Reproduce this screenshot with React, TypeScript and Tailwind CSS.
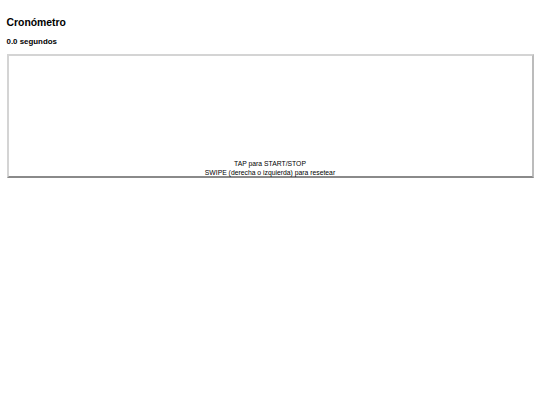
import React, { useRef, useState } from 'react';

export default function App() {
  const [elapsed, setElapsed] = useState(0);
  const [running, setRunning] = useState(false);
  const timer = useRef<number | null>(null);
  const startX = useRef<number | null>(null);

  const toggle = () => {
    if (running) {
      if (timer.current) window.clearInterval(timer.current);
      timer.current = null;
      setRunning(false);
    } else {
      timer.current = window.setInterval(() => setElapsed((t) => t + 0.1), 100);
      setRunning(true);
    }
  };

  const reset = () => {
    if (timer.current) window.clearInterval(timer.current);
    timer.current = null;
    setRunning(false);
    setElapsed(0);
  };

  const onPointerDown = (e: React.PointerEvent) => {
    startX.current = e.clientX;
  };

  const onPointerUp = (e: React.PointerEvent) => {
    if (startX.current === null) return;
    const dx = e.clientX - startX.current;
    startX.current = null;
    if (Math.abs(dx) > 40) reset();
    else toggle();
  };

  return (
    <div className="min-h-[405px] bg-white px-[6.5px] pt-[16px] font-['Liberation_Sans',Arial,sans-serif] text-black">
      <h3 className="text-[10.4px] font-bold leading-[14px]">Cronómetro</h3>
      <p className="mt-[7px] text-[7.9px] font-bold leading-[10px]">
        {elapsed.toFixed(1)} segundos
      </p>

      {/* touch area for tap / swipe */}
      <div
        onPointerDown={onPointerDown}
        onPointerUp={onPointerUp}
        className="mt-[7px] flex h-[124px] cursor-pointer select-none flex-col justify-end border-2 border-t-[#d4d4d4] border-l-[#d4d4d4] border-r-[#bcbcbc] border-b-[#8a8a8a] text-center text-[6.8px] leading-[9px]"
      >
        <span>TAP para START/STOP</span>
        <span className="-mb-[1px]">SWIPE (derecha o izquierda) para resetear</span>
      </div>
    </div>
  );
}
